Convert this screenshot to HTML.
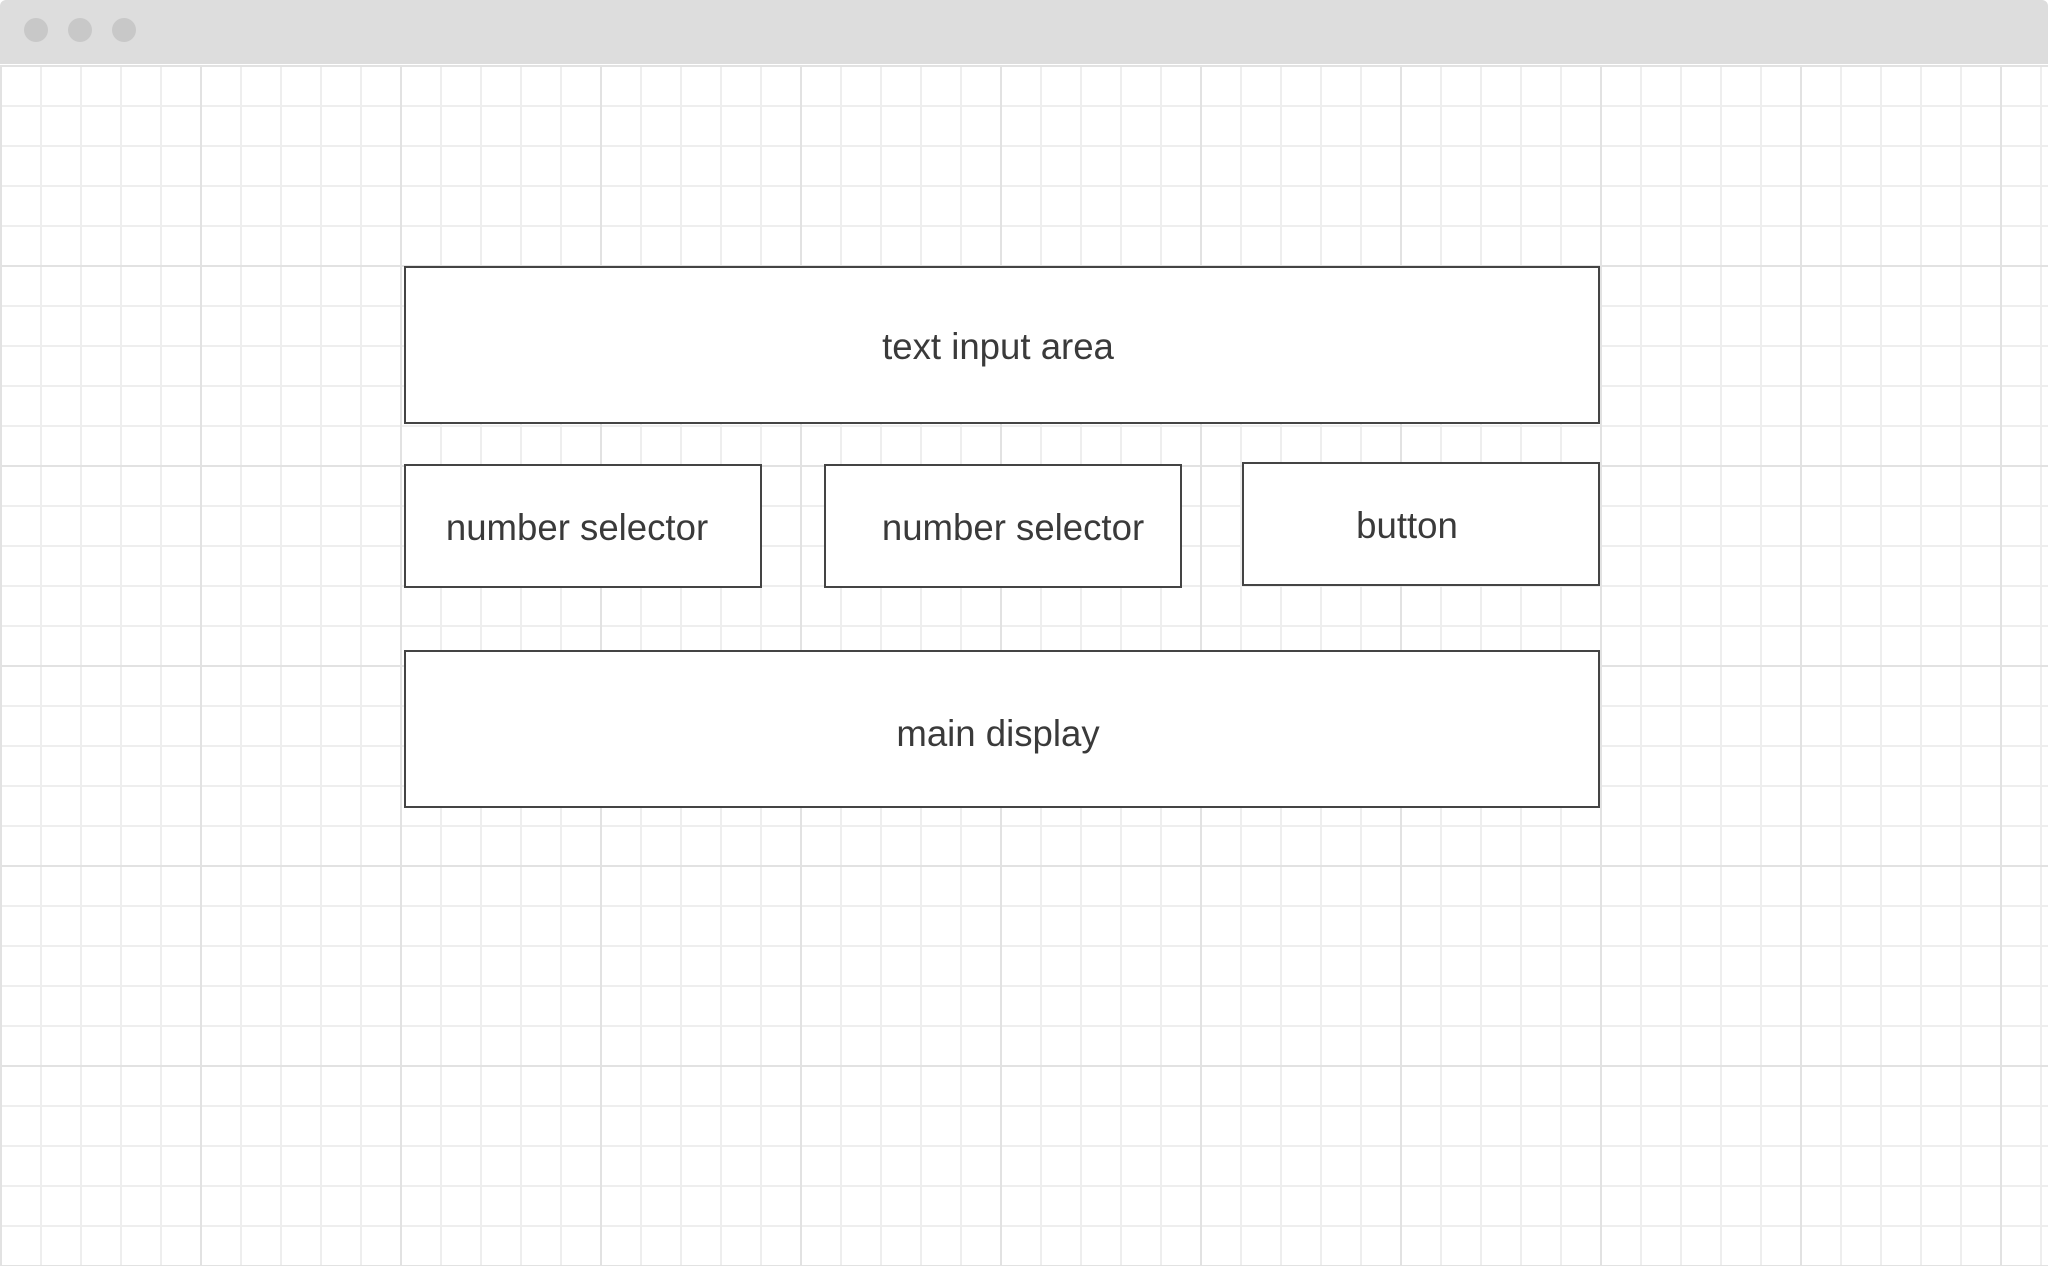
<!DOCTYPE html>
<html><head><meta charset="utf-8"><style>
html,body{margin:0;padding:0;}
body{width:2048px;height:1266px;position:relative;overflow:hidden;background:#fff;font-family:"Liberation Sans",sans-serif;}
.bar{position:absolute;left:0;top:0;width:2048px;height:64px;background:#dddddd;border-radius:6px 6px 0 0;}
.dot{position:absolute;top:18px;width:24px;height:24px;border-radius:50%;background:#c8c8c8;}
.grid{position:absolute;left:0;top:65px;width:2048px;height:1201px;
background-image:
linear-gradient(to right,#e2e2e2 0,#e2e2e2 2px,transparent 2px),
linear-gradient(to bottom,#e2e2e2 0,#e2e2e2 2px,transparent 2px),
linear-gradient(to right,#eeeeee 0,#eeeeee 2px,transparent 2px),
linear-gradient(to bottom,#eeeeee 0,#eeeeee 2px,transparent 2px);
background-size:200px 200px,200px 200px,40px 40px,40px 40px;
background-position:0 0,0 0,0 0,0 0;}
.box{position:absolute;box-sizing:border-box;border:2px solid #444;background:#fff;color:#3a3a3a;font-size:36.6px;display:flex;align-items:center;justify-content:center;}
</style></head><body>
<div class="bar"></div>
<div class="dot" style="left:24px"></div>
<div class="dot" style="left:68px"></div>
<div class="dot" style="left:112px"></div>
<div class="grid"></div>
<div class="box" style="left:404px;top:266px;width:1196px;height:158px;"><span style="position:relative;left:-4px;top:2px">text input area</span></div>
<div class="box" style="left:404px;top:464px;width:358px;height:124px;"><span style="position:relative;left:-6px;top:2px">number selector</span></div>
<div class="box" style="left:824px;top:464px;width:358px;height:124px;"><span style="position:relative;left:10px;top:2px">number selector</span></div>
<div class="box" style="left:1242px;top:462px;width:358px;height:124px;"><span style="position:relative;left:-14px;top:2px">button</span></div>
<div class="box" style="left:404px;top:650px;width:1196px;height:158px;"><span style="position:relative;left:-4px;top:5px">main display</span></div>
</body></html>
